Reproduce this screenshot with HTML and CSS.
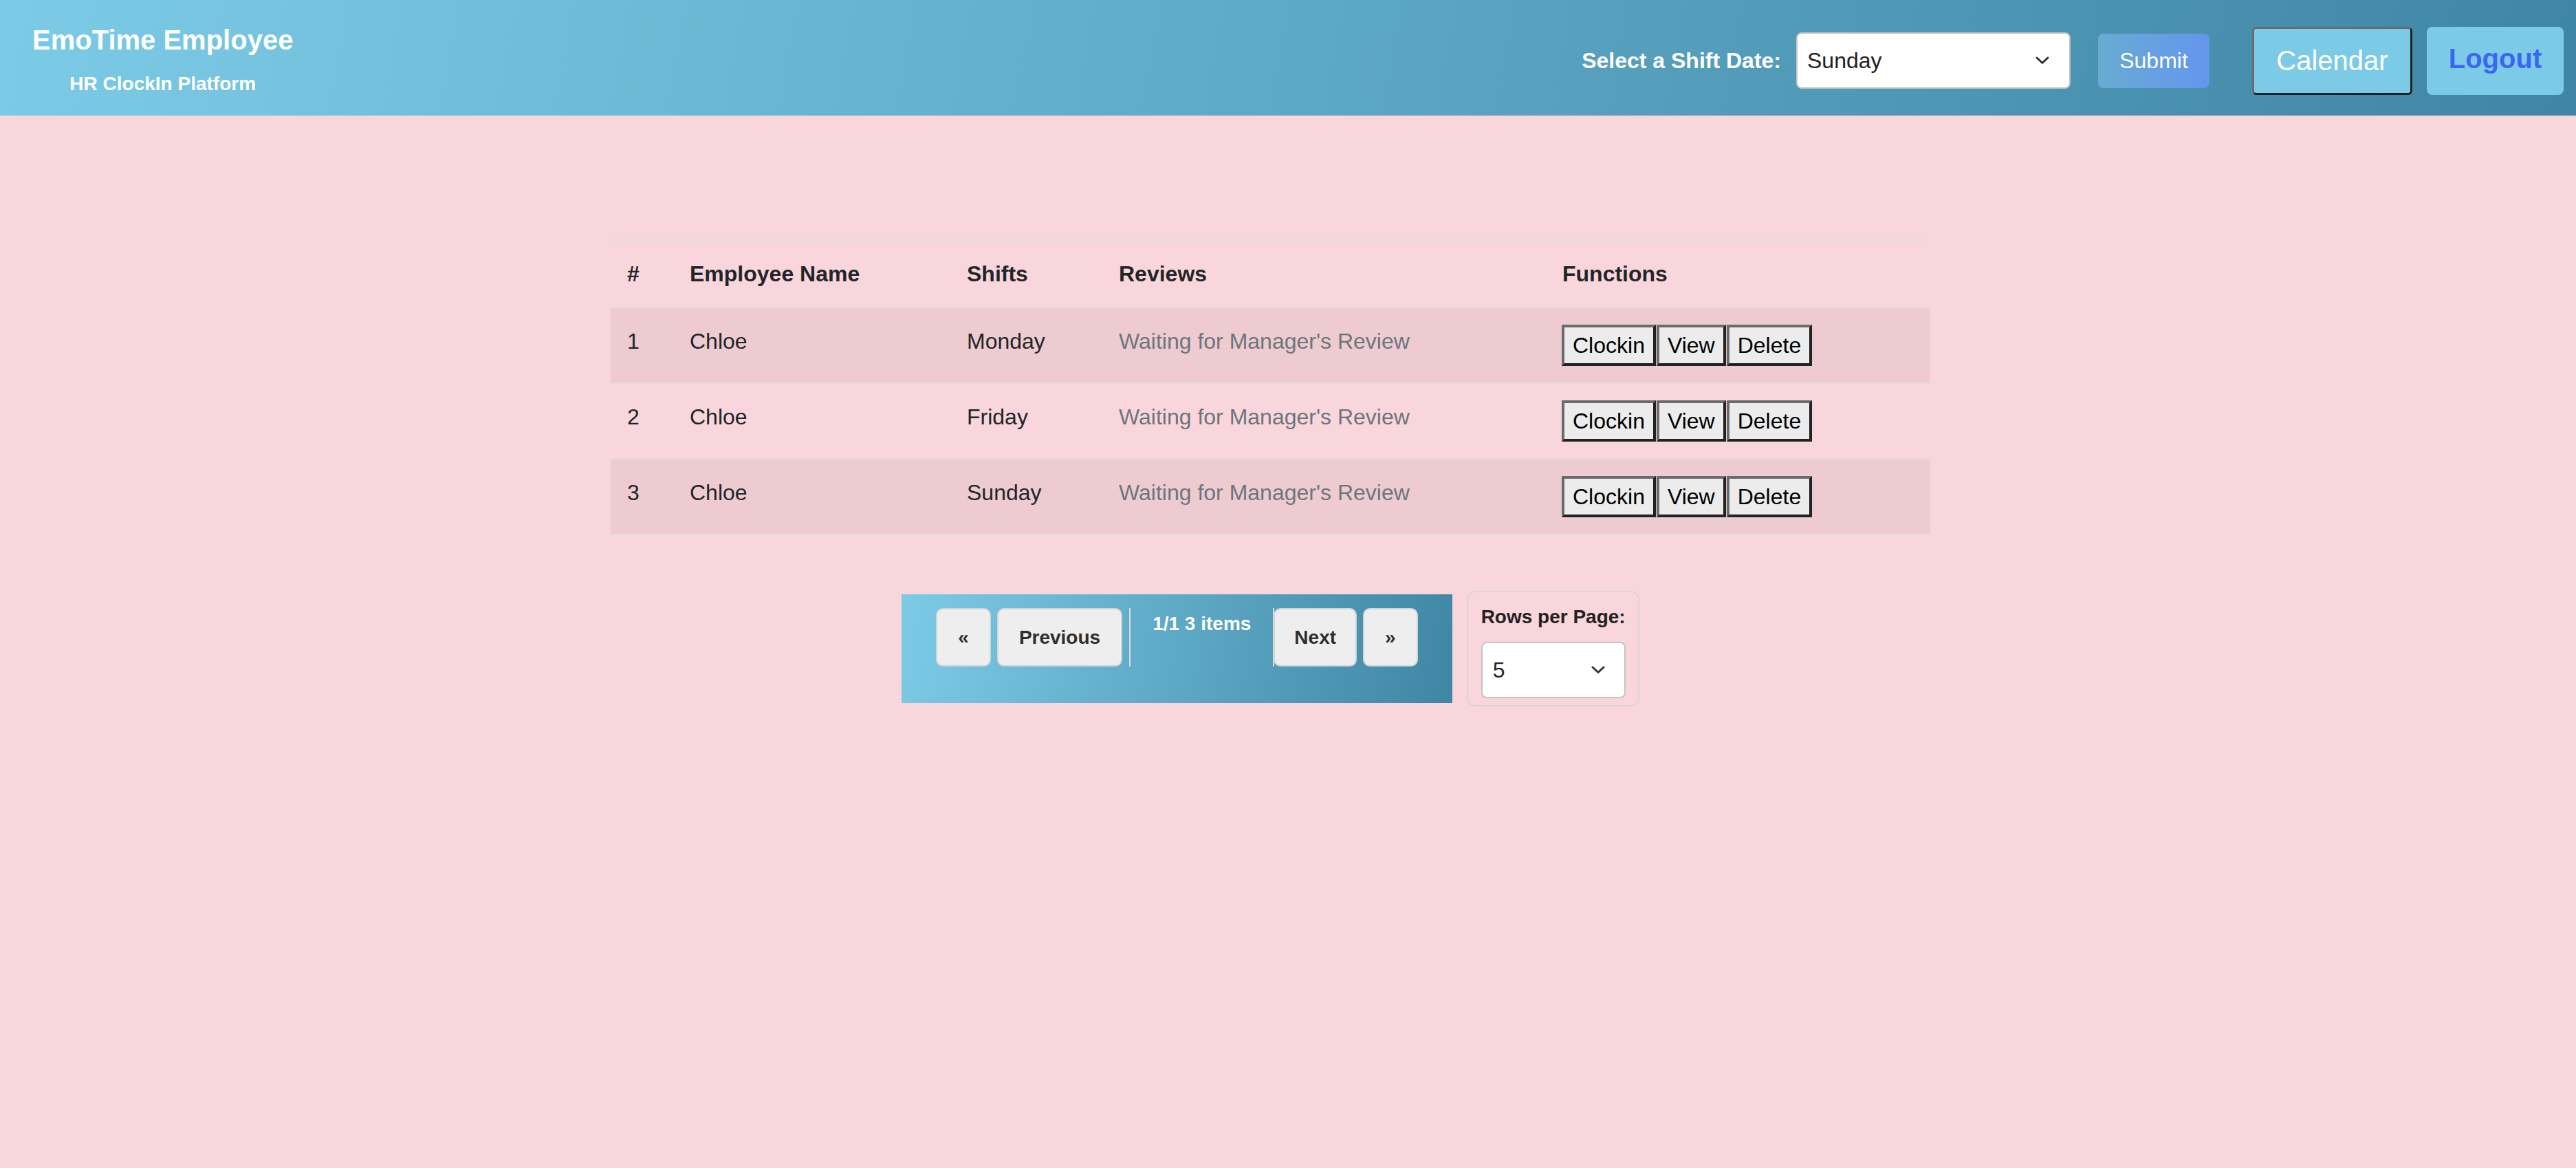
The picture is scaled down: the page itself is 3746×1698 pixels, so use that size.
FILE: index.html
```html
<!DOCTYPE html>
<html lang="en">
<head>
<meta charset="utf-8">
<title>EmoTime Employee</title>
<link rel="stylesheet" href="styles.css">
</head>
<body>
<header class="topbar">
  <div class="brand">
    <h1 class="brand-title">EmoTime Employee</h1>
    <p class="brand-sub">HR ClockIn Platform</p>
  </div>
  <nav class="actions">
    <label class="shift-label" for="shift">Select a Shift Date:</label>
    <div class="select-wrap shift-select">
      <select id="shift" class="select">
        <option>Monday</option>
        <option>Tuesday</option>
        <option>Wednesday</option>
        <option>Thursday</option>
        <option>Friday</option>
        <option>Saturday</option>
        <option selected>Sunday</option>
      </select>
      <svg class="chevron" width="20" height="12" viewBox="0 0 20 12" aria-hidden="true"><polyline points="2,2 10,9.5 18,2" fill="none" stroke="#333" stroke-width="3" stroke-linecap="round" stroke-linejoin="round"/></svg>
    </div>
    <button class="submit-btn" type="button">Submit</button>
    <button class="calendar-btn" type="button">Calendar</button>
    <button class="logout-btn" type="button">Logout</button>
  </nav>
</header>

<main class="content">
  <table class="shift-table">
    <thead>
      <tr>
        <th class="col-num">#</th>
        <th class="col-name">Employee Name</th>
        <th class="col-shift">Shifts</th>
        <th class="col-review">Reviews</th>
        <th class="col-func">Functions</th>
      </tr>
    </thead>
    <tbody>
      <tr class="striped">
        <td>1</td>
        <td>Chloe</td>
        <td>Monday</td>
        <td class="muted">Waiting for Manager's Review</td>
        <td><div class="fn-group"><button class="fn-btn" type="button">Clockin</button><button class="fn-btn" type="button">View</button><button class="fn-btn" type="button">Delete</button></div></td>
      </tr>
      <tr>
        <td>2</td>
        <td>Chloe</td>
        <td>Friday</td>
        <td class="muted">Waiting for Manager's Review</td>
        <td><div class="fn-group"><button class="fn-btn" type="button">Clockin</button><button class="fn-btn" type="button">View</button><button class="fn-btn" type="button">Delete</button></div></td>
      </tr>
      <tr class="striped">
        <td>3</td>
        <td>Chloe</td>
        <td>Sunday</td>
        <td class="muted">Waiting for Manager's Review</td>
        <td><div class="fn-group"><button class="fn-btn" type="button">Clockin</button><button class="fn-btn" type="button">View</button><button class="fn-btn" type="button">Delete</button></div></td>
      </tr>
    </tbody>
  </table>

  <div class="pager-row">
    <div class="pager">
      <button class="pg-btn" type="button">«</button>
      <button class="pg-btn pg-prev" type="button">Previous</button>
      <span class="pg-info">1/1 3 items</span>
      <button class="pg-btn pg-next" type="button">Next</button>
      <button class="pg-btn" type="button">»</button>
    </div>
    <div class="rows-box">
      <label class="rows-label" for="rows">Rows per Page:</label>
      <div class="select-wrap rows-select">
        <select id="rows" class="select">
          <option selected>5</option>
          <option>10</option>
          <option>20</option>
        </select>
        <svg class="chevron" width="20" height="12" viewBox="0 0 20 12" aria-hidden="true"><polyline points="2,2 10,9.5 18,2" fill="none" stroke="#333" stroke-width="3" stroke-linecap="round" stroke-linejoin="round"/></svg>
      </div>
    </div>
  </div>
</main>
</body>
</html>
```

FILE: styles.css
```css
* {
  box-sizing: border-box;
}

html, body {
  margin: 0;
  padding: 0;
}

body {
  min-height: 1698px;
  background: #f9d6db;
  font-family: "Liberation Sans", Arial, Helvetica, sans-serif;
  color: #212529;
}

/* ---------- header ---------- */
.topbar {
  display: flex;
  justify-content: space-between;
  height: 168px;
  padding: 0 18px 0 47px;
  background: linear-gradient(100deg, #7ccbe6 0%, #3f86a4 100%);
}

.brand {
  display: flex;
  flex-direction: column;
  align-items: center;
  align-self: flex-start;
  margin-top: 34px;
}

.brand-title {
  margin: 0;
  font-size: 40px;
  line-height: 48px;
  font-weight: 700;
  color: #fff;
}

.brand-sub {
  margin: 23px 0 0;
  font-size: 28px;
  line-height: 34px;
  font-weight: 700;
  color: #fff;
}

.actions {
  display: flex;
  align-items: center;
  align-self: center;
  margin-top: 8px;
}

.shift-label {
  margin-right: 22px;
  font-size: 32px;
  font-weight: 700;
  color: #fff;
}

.select-wrap {
  position: relative;
}

.select {
  display: block;
  width: 100%;
  height: 82px;
  padding: 0 50px 0 14px;
  border: 2px solid #c4c4c4;
  border-radius: 8px;
  background: #fff;
  font-family: "Liberation Sans", Arial, Helvetica, sans-serif;
  font-size: 32px;
  color: #222;
  appearance: none;
  -webkit-appearance: none;
}

.chevron {
  position: absolute;
  top: 35px;
  right: 31px;
  pointer-events: none;
}

.shift-select {
  width: 399px;
  margin-right: 40px;
}

.submit-btn {
  width: 162px;
  height: 79px;
  margin-right: 62px;
  border: 0;
  border-radius: 8px;
  background: linear-gradient(to right, #68abd2, #6496ed);
  font-family: "Liberation Sans", Arial, Helvetica, sans-serif;
  font-size: 32px;
  color: #fff;
}

.calendar-btn {
  width: 233px;
  height: 99px;
  margin-right: 21px;
  border: 3px solid;
  border-color: #6b6b6b #222 #222 #6b6b6b;
  border-radius: 6px;
  background: #7ccbe6;
  font-family: "Liberation Sans", Arial, Helvetica, sans-serif;
  font-size: 40px;
  color: #fff;
}

.logout-btn {
  width: 199px;
  height: 99px;
  padding: 0 0 6px;
  border: 0;
  border-radius: 8px;
  background: #7ccbe6;
  font-family: "Liberation Sans", Arial, Helvetica, sans-serif;
  font-size: 40px;
  font-weight: 700;
  color: #3b66f4;
}

/* ---------- table ---------- */
.content {
  width: 1919px;
  margin: 180px 0 0 888px;
}

.shift-table {
  width: 100%;
  border-collapse: collapse;
  table-layout: fixed;
  font-size: 32px;
  line-height: 48px;
}

.shift-table th,
.shift-table td {
  padding: 24px;
  border-top: 2px solid #dfdde0;
  text-align: left;
  vertical-align: top;
}

.shift-table tbody tr:last-child td {
  border-bottom: 2px solid #dfdde0;
}

.shift-table th {
  font-weight: 700;
  color: #212529;
}

.col-num { width: 91px; }
.col-name { width: 403px; }
.col-shift { width: 221px; }
.col-review { width: 645px; }
.col-func { width: 559px; }

.striped {
  background: #edcbd0;
}

.muted {
  color: #6c757d;
}

.fn-group {
  display: flex;
  gap: 1px;
  margin-left: -1px;
}

.fn-btn {
  height: 60px;
  padding: 0 12px;
  border: 4px solid;
  border-color: #6b6b6b #222 #222 #6b6b6b;
  background: #ececec;
  font-family: "Liberation Sans", Arial, Helvetica, sans-serif;
  font-size: 32px;
  line-height: 52px;
  color: #000;
}

/* ---------- pagination ---------- */
.pager-row {
  display: flex;
  justify-content: center;
  align-items: center;
  gap: 21px;
  margin-top: 81px;
}

.pager {
  display: flex;
  align-items: stretch;
  padding: 20px 50px 53px;
  background: linear-gradient(100deg, #7ccbe6 0%, #3f86a4 100%);
}

.pg-btn {
  height: 85px;
  padding: 0 30px;
  margin-right: 9px;
  border: 2px solid #d4d4d4;
  border-radius: 10px;
  background: #eeeeee;
  font-family: "Liberation Sans", Arial, Helvetica, sans-serif;
  font-size: 28px;
  font-weight: 700;
  color: #2e2e2e;
}

.pg-btn:last-child {
  margin-right: 0;
}

.pg-prev {
  margin-right: 10px;
}

.pg-next {
  padding: 0 28px;
  margin-left: -1px;
}

.pg-info {
  display: block;
  padding: 0 32px;
  border-left: 2px solid #dcdcdc;
  border-right: 2px solid #dcdcdc;
  font-size: 28px;
  line-height: 46px;
  font-weight: 700;
  color: #fff;
}

.rows-box {
  display: flex;
  flex-direction: column;
  padding: 19px 18px 10px 19px;
  border: 2px solid #dcd3d6;
  border-radius: 12px;
}

.rows-label {
  font-size: 28px;
  line-height: 34px;
  font-weight: 700;
  color: #222;
}

.rows-select {
  margin-top: 19px;
}

.rows-select .select {
  padding-left: 15px;
}

.rows-select .chevron {
  right: 30px;
}
```
